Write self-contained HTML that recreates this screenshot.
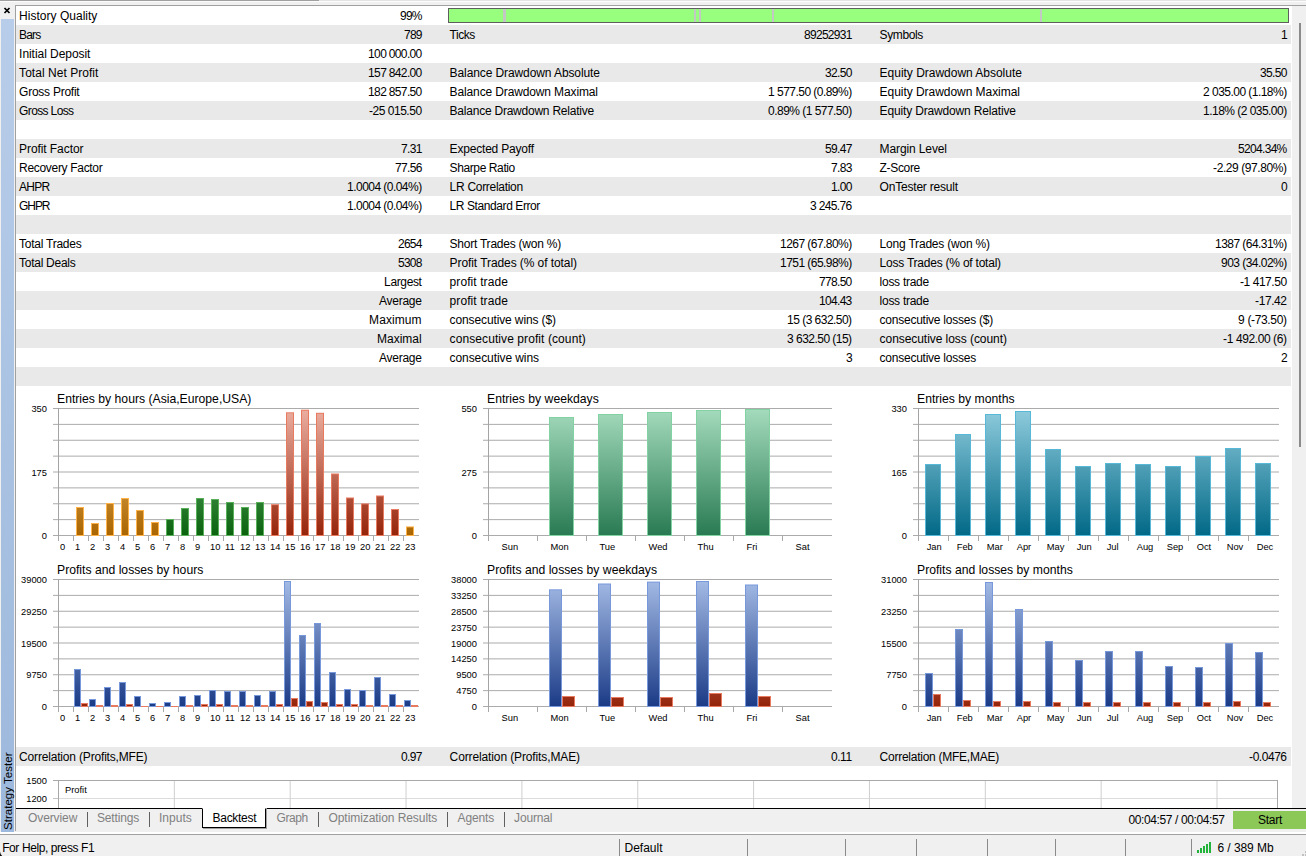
<!DOCTYPE html>
<html><head><meta charset="utf-8"><title>Strategy Tester</title>
<style>
html,body{margin:0;padding:0;}
html{width:1306px;height:856px;overflow:hidden;}
body{width:1306px;height:856px;overflow:hidden;background:#f0f0f0;position:relative;font-family:"Liberation Sans",sans-serif;font-size:12px;color:#000;}
div,span{position:absolute;box-sizing:border-box;}
.t{white-space:pre;line-height:19px;height:19px;font-size:12px;overflow:visible;}
.t.sb{height:15px;line-height:15px;}
.row{left:16px;width:1275px;height:19px;background:#e9e9e9;}
svg{position:absolute;left:0;top:0;}
svg text{font-family:"Liberation Sans",sans-serif;}
</style></head><body>

<div style="left:0;top:0;width:319px;height:1px;background:#a0a0a0"></div>
<div style="left:319px;top:0;width:987px;height:1px;background:#e3e3e3"></div>
<div style="left:0;top:1px;width:1306px;height:1px;background:#fcfcfc"></div>
<div style="left:15px;top:5px;width:1291px;height:1px;background:#a0a0a0"></div>
<div style="left:15px;top:5px;width:1px;height:826px;background:#a0a0a0"></div>
<div style="left:1px;top:19px;width:13px;height:813px;background:linear-gradient(#b8cde9,#9cb8dc)"></div>
<div style="left:16px;top:6px;width:1276px;height:802px;background:#fff"></div>
<div style="left:1292px;top:6px;width:14px;height:802px;background:#f0f0f0"></div>
<div style="left:1299px;top:23px;width:2px;height:424px;background:#8b8b8b"></div>
<div class="row" style="top:25px"></div>
<div class="row" style="top:63px"></div>
<div class="row" style="top:101px"></div>
<div class="row" style="top:139px"></div>
<div class="row" style="top:177px"></div>
<div class="row" style="top:215px"></div>
<div class="row" style="top:253px"></div>
<div class="row" style="top:291px"></div>
<div class="row" style="top:329px"></div>
<div class="row" style="top:367px"></div>
<div class="row" style="top:747px"></div>
<div style="left:448px;top:8px;width:841px;height:15px;background:#97fe7e;border:1px solid #5e5e5e"></div>
<div style="left:503px;top:9px;width:3px;height:13px;background:#c4c8c4"></div>
<div style="left:694px;top:9px;width:2px;height:13px;background:#c4c8c4"></div>
<div style="left:699px;top:9px;width:2px;height:13px;background:#c4c8c4"></div>
<div style="left:772px;top:9px;width:2px;height:13px;background:#c4c8c4"></div>
<div style="left:1040px;top:9px;width:2px;height:13px;background:#c4c8c4"></div>
<div style="left:16px;top:808px;width:1290px;height:1px;background:#000"></div>
<div style="left:16px;top:809px;width:1290px;height:23px;background:#f0f0f0"></div>
<div style="left:0px;top:832px;width:1306px;height:2px;background:#fff"></div>
<div style="left:0px;top:834px;width:1306px;height:1px;background:#a0a0a0"></div>
<div style="left:203px;top:808px;width:64px;height:21px;background:#a0a0a0"></div>
<div style="left:202px;top:808px;width:64px;height:20px;background:#fff;border:1px solid #000;border-top:1px solid #fff"></div>
<div style="left:87px;top:812px;width:1px;height:15px;background:#606060"></div>
<div style="left:149px;top:812px;width:1px;height:15px;background:#606060"></div>
<div style="left:318px;top:812px;width:1px;height:15px;background:#606060"></div>
<div style="left:447px;top:812px;width:1px;height:15px;background:#606060"></div>
<div style="left:504px;top:812px;width:1px;height:15px;background:#606060"></div>
<div style="left:1233px;top:811px;width:73px;height:18px;background:#8cc858"></div>
<div style="left:619px;top:839px;width:1px;height:17px;background:#8a8a8a"></div>
<div style="left:747px;top:839px;width:1px;height:17px;background:#8a8a8a"></div>
<div style="left:845px;top:839px;width:1px;height:17px;background:#8a8a8a"></div>
<div style="left:916px;top:839px;width:1px;height:17px;background:#8a8a8a"></div>
<div style="left:987px;top:839px;width:1px;height:17px;background:#8a8a8a"></div>
<div style="left:1055px;top:839px;width:1px;height:17px;background:#8a8a8a"></div>
<div style="left:1125px;top:839px;width:1px;height:17px;background:#8a8a8a"></div>
<div style="left:1191px;top:839px;width:1px;height:17px;background:#8a8a8a"></div>
<svg width="16" height="20" style="left:0;top:0"><path d="M4.5 8 L9.5 13 M9.5 8 L4.5 13" stroke="#000" stroke-width="1.7" fill="none"/></svg>
<span id="vt" style="left:2px;top:830px;width:80px;height:13px;line-height:13px;font-size:11.5px;letter-spacing:0.03px;white-space:pre;transform-origin:0 0;transform:rotate(-90deg);">Strategy Tester</span>
<span class="t" id="s0" style="left:19.10px;top:7.0px;letter-spacing:0.018px;">History Quality</span>
<span class="t" id="s1" style="left:400.10px;top:7.0px;letter-spacing:-0.844px;">99%</span>
<span class="t" id="s2" style="left:19.10px;top:26.0px;letter-spacing:-0.847px;">Bars</span>
<span class="t" id="s3" style="left:404.10px;top:26.0px;letter-spacing:-0.844px;">789</span>
<span class="t" id="s4" style="left:449.60px;top:26.0px;letter-spacing:-0.452px;">Ticks</span>
<span class="t" id="s5" style="left:804.10px;top:26.0px;letter-spacing:-0.736px;">89252931</span>
<span class="t" id="s6" style="left:879.60px;top:26.0px;letter-spacing:-0.388px;">Symbols</span>
<span class="t" id="s7" style="left:1281.10px;top:26.0px;letter-spacing:-1.188px;">1</span>
<span class="t" id="s8" style="left:19.10px;top:45.0px;letter-spacing:-0.050px;">Initial Deposit</span>
<span class="t" id="s9" style="left:368.10px;top:45.0px;letter-spacing:-0.656px;">100 000.00</span>
<span class="t" id="s10" style="left:19.10px;top:64.0px;letter-spacing:0.037px;">Total Net Profit</span>
<span class="t" id="s11" style="left:368.10px;top:64.0px;letter-spacing:-0.656px;">157 842.00</span>
<span class="t" id="s12" style="left:449.60px;top:64.0px;letter-spacing:-0.099px;">Balance Drawdown Absolute</span>
<span class="t" id="s13" style="left:825.10px;top:64.0px;letter-spacing:-0.706px;">32.50</span>
<span class="t" id="s14" style="left:879.60px;top:64.0px;letter-spacing:-0.019px;">Equity Drawdown Absolute</span>
<span class="t" id="s15" style="left:1260.10px;top:64.0px;letter-spacing:-0.706px;">35.50</span>
<span class="t" id="s16" style="left:19.10px;top:83.0px;letter-spacing:-0.255px;">Gross Profit</span>
<span class="t" id="s17" style="left:368.10px;top:83.0px;letter-spacing:-0.656px;">182 857.50</span>
<span class="t" id="s18" style="left:449.60px;top:83.0px;letter-spacing:-0.129px;">Balance Drawdown Maximal</span>
<span class="t" id="s19" style="left:768.10px;top:83.0px;letter-spacing:-0.535px;">1 577.50 (0.89%)</span>
<span class="t" id="s20" style="left:879.60px;top:83.0px;letter-spacing:-0.047px;">Equity Drawdown Maximal</span>
<span class="t" id="s21" style="left:1203.10px;top:83.0px;letter-spacing:-0.535px;">2 035.00 (1.18%)</span>
<span class="t" id="s22" style="left:19.10px;top:102.0px;letter-spacing:-0.639px;">Gross Loss</span>
<span class="t" id="s23" style="left:369.10px;top:102.0px;letter-spacing:-0.489px;">-25 015.50</span>
<span class="t" id="s24" style="left:449.60px;top:102.0px;letter-spacing:-0.231px;">Balance Drawdown Relative</span>
<span class="t" id="s25" style="left:768.10px;top:102.0px;letter-spacing:-0.535px;">0.89% (1 577.50)</span>
<span class="t" id="s26" style="left:879.60px;top:102.0px;letter-spacing:-0.157px;">Equity Drawdown Relative</span>
<span class="t" id="s27" style="left:1203.10px;top:102.0px;letter-spacing:-0.535px;">1.18% (2 035.00)</span>
<span class="t" id="s28" style="left:19.10px;top:140.0px;letter-spacing:-0.081px;">Profit Factor</span>
<span class="t" id="s29" style="left:401.10px;top:140.0px;letter-spacing:-0.715px;">7.31</span>
<span class="t" id="s30" style="left:449.60px;top:140.0px;letter-spacing:-0.191px;">Expected Payoff</span>
<span class="t" id="s31" style="left:825.10px;top:140.0px;letter-spacing:-0.706px;">59.47</span>
<span class="t" id="s32" style="left:879.60px;top:140.0px;letter-spacing:-0.117px;">Margin Level</span>
<span class="t" id="s33" style="left:1238.10px;top:140.0px;letter-spacing:-0.693px;">5204.34%</span>
<span class="t" id="s34" style="left:19.10px;top:159.0px;letter-spacing:-0.315px;">Recovery Factor</span>
<span class="t" id="s35" style="left:395.10px;top:159.0px;letter-spacing:-0.706px;">77.56</span>
<span class="t" id="s36" style="left:449.60px;top:159.0px;letter-spacing:-0.396px;">Sharpe Ratio</span>
<span class="t" id="s37" style="left:831.10px;top:159.0px;letter-spacing:-0.715px;">7.83</span>
<span class="t" id="s38" style="left:879.60px;top:159.0px;letter-spacing:-0.341px;">Z-Score</span>
<span class="t" id="s39" style="left:1213.10px;top:159.0px;letter-spacing:-0.421px;">-2.29 (97.80%)</span>
<span class="t" id="s40" style="left:19.10px;top:178.0px;letter-spacing:-0.761px;">AHPR</span>
<span class="t" id="s41" style="left:347.10px;top:178.0px;letter-spacing:-0.540px;">1.0004 (0.04%)</span>
<span class="t" id="s42" style="left:449.60px;top:178.0px;letter-spacing:-0.291px;">LR Correlation</span>
<span class="t" id="s43" style="left:831.10px;top:178.0px;letter-spacing:-0.715px;">1.00</span>
<span class="t" id="s44" style="left:879.60px;top:178.0px;letter-spacing:-0.205px;">OnTester result</span>
<span class="t" id="s45" style="left:1281.10px;top:178.0px;letter-spacing:-1.188px;">0</span>
<span class="t" id="s46" style="left:19.10px;top:197.0px;letter-spacing:-1.093px;">GHPR</span>
<span class="t" id="s47" style="left:347.10px;top:197.0px;letter-spacing:-0.540px;">1.0004 (0.04%)</span>
<span class="t" id="s48" style="left:449.60px;top:197.0px;letter-spacing:-0.417px;">LR Standard Error</span>
<span class="t" id="s49" style="left:810.10px;top:197.0px;letter-spacing:-0.652px;">3 245.76</span>
<span class="t" id="s50" style="left:19.10px;top:235.0px;letter-spacing:-0.256px;">Total Trades</span>
<span class="t" id="s51" style="left:398.10px;top:235.0px;letter-spacing:-0.801px;">2654</span>
<span class="t" id="s52" style="left:449.60px;top:235.0px;letter-spacing:-0.237px;">Short Trades (won %)</span>
<span class="t" id="s53" style="left:780.10px;top:235.0px;letter-spacing:-0.556px;">1267 (67.80%)</span>
<span class="t" id="s54" style="left:879.60px;top:235.0px;letter-spacing:-0.198px;">Long Trades (won %)</span>
<span class="t" id="s55" style="left:1215.10px;top:235.0px;letter-spacing:-0.556px;">1387 (64.31%)</span>
<span class="t" id="s56" style="left:19.10px;top:254.0px;letter-spacing:-0.280px;">Total Deals</span>
<span class="t" id="s57" style="left:398.10px;top:254.0px;letter-spacing:-0.801px;">5308</span>
<span class="t" id="s58" style="left:449.60px;top:254.0px;letter-spacing:-0.080px;">Profit Trades (% of total)</span>
<span class="t" id="s59" style="left:780.10px;top:254.0px;letter-spacing:-0.556px;">1751 (65.98%)</span>
<span class="t" id="s60" style="left:879.60px;top:254.0px;letter-spacing:-0.226px;">Loss Trades (% of total)</span>
<span class="t" id="s61" style="left:1221.10px;top:254.0px;letter-spacing:-0.546px;">903 (34.02%)</span>
<span class="t" id="s62" style="left:384.10px;top:273.0px;letter-spacing:-0.362px;">Largest</span>
<span class="t" id="s63" style="left:449.60px;top:273.0px;letter-spacing:0.077px;">profit trade</span>
<span class="t" id="s64" style="left:819.10px;top:273.0px;letter-spacing:-0.701px;">778.50</span>
<span class="t" id="s65" style="left:879.60px;top:273.0px;letter-spacing:-0.273px;">loss trade</span>
<span class="t" id="s66" style="left:1240.10px;top:273.0px;letter-spacing:-0.469px;">-1 417.50</span>
<span class="t" id="s67" style="left:379.10px;top:292.0px;letter-spacing:-0.283px;">Average</span>
<span class="t" id="s68" style="left:449.60px;top:292.0px;letter-spacing:0.077px;">profit trade</span>
<span class="t" id="s69" style="left:819.10px;top:292.0px;letter-spacing:-0.701px;">104.43</span>
<span class="t" id="s70" style="left:879.60px;top:292.0px;letter-spacing:-0.273px;">loss trade</span>
<span class="t" id="s71" style="left:1255.10px;top:292.0px;letter-spacing:-0.422px;">-17.42</span>
<span class="t" id="s72" style="left:369.10px;top:311.0px;letter-spacing:0.069px;">Maximum</span>
<span class="t" id="s73" style="left:449.60px;top:311.0px;letter-spacing:-0.121px;">consecutive wins ($)</span>
<span class="t" id="s74" style="left:787.10px;top:311.0px;letter-spacing:-0.530px;">15 (3 632.50)</span>
<span class="t" id="s75" style="left:879.60px;top:311.0px;letter-spacing:-0.246px;">consecutive losses ($)</span>
<span class="t" id="s76" style="left:1238.10px;top:311.0px;letter-spacing:-0.353px;">9 (-73.50)</span>
<span class="t" id="s77" style="left:377.10px;top:330.0px;letter-spacing:-0.025px;">Maximal</span>
<span class="t" id="s78" style="left:449.60px;top:330.0px;letter-spacing:0.086px;">consecutive profit (count)</span>
<span class="t" id="s79" style="left:787.10px;top:330.0px;letter-spacing:-0.530px;">3 632.50 (15)</span>
<span class="t" id="s80" style="left:879.60px;top:330.0px;letter-spacing:-0.060px;">consecutive loss (count)</span>
<span class="t" id="s81" style="left:1223.10px;top:330.0px;letter-spacing:-0.401px;">-1 492.00 (6)</span>
<span class="t" id="s82" style="left:379.10px;top:349.0px;letter-spacing:-0.283px;">Average</span>
<span class="t" id="s83" style="left:449.60px;top:349.0px;letter-spacing:-0.089px;">consecutive wins</span>
<span class="t" id="s84" style="left:846.10px;top:349.0px;letter-spacing:-1.188px;">3</span>
<span class="t" id="s85" style="left:879.60px;top:349.0px;letter-spacing:-0.245px;">consecutive losses</span>
<span class="t" id="s86" style="left:1281.10px;top:349.0px;letter-spacing:-1.188px;">2</span>
<span class="t" id="s87" style="left:19.10px;top:748.0px;letter-spacing:-0.176px;">Correlation (Profits,MFE)</span>
<span class="t" id="s88" style="left:401.10px;top:748.0px;letter-spacing:-0.715px;">0.97</span>
<span class="t" id="s89" style="left:449.60px;top:748.0px;letter-spacing:-0.123px;">Correlation (Profits,MAE)</span>
<span class="t" id="s90" style="left:831.10px;top:748.0px;letter-spacing:-0.492px;">0.11</span>
<span class="t" id="s91" style="left:879.60px;top:748.0px;letter-spacing:-0.257px;">Correlation (MFE,MAE)</span>
<span class="t" id="s92" style="left:1249.10px;top:748.0px;letter-spacing:-0.458px;">-0.0476</span>
<span class="t" id="s93" style="left:28.00px;top:808.5px;letter-spacing:-0.102px;color:#808080;">Overview</span>
<span class="t" id="s94" style="left:97.00px;top:808.5px;letter-spacing:-0.170px;color:#808080;">Settings</span>
<span class="t" id="s95" style="left:159.00px;top:808.5px;letter-spacing:0.033px;color:#808080;">Inputs</span>
<span class="t" id="s96" style="left:212.60px;top:808.5px;letter-spacing:-0.304px;color:#000;">Backtest</span>
<span class="t" id="s97" style="left:276.50px;top:808.5px;letter-spacing:-0.432px;color:#808080;">Graph</span>
<span class="t" id="s98" style="left:328.50px;top:808.5px;letter-spacing:-0.067px;color:#808080;">Optimization Results</span>
<span class="t" id="s99" style="left:457.50px;top:808.5px;letter-spacing:-0.110px;color:#808080;">Agents</span>
<span class="t" id="s100" style="left:514.10px;top:808.5px;letter-spacing:-0.180px;color:#808080;">Journal</span>
<span class="t sb" id="s101" style="left:2.20px;top:841.0px;letter-spacing:-0.410px;">For Help, press F1</span>
<span class="t sb" id="s102" style="left:624.50px;top:841.0px;letter-spacing:-0.004px;">Default</span>
<span class="t" id="s103" style="left:1128.50px;top:810.5px;letter-spacing:-0.391px;">00:04:57 / 00:04:57</span>
<span class="t" id="s104" style="left:1258.00px;top:810.5px;letter-spacing:-0.269px;">Start</span>
<span class="t sb" id="s105" style="left:1217.50px;top:841.0px;letter-spacing:-0.070px;">6 / 389 Mb</span>
<svg width="1306" height="856" style="pointer-events:none"><rect x="1197" y="850" width="2" height="3" fill="#22b43a"/><rect x="1200" y="848" width="2" height="5" fill="#22b43a"/><rect x="1203" y="846" width="2" height="7" fill="#22b43a"/><rect x="1206" y="844" width="2" height="9" fill="#22b43a"/><rect x="1209" y="842" width="2" height="11" fill="#22b43a"/><rect x="1302" y="854" width="2" height="2" fill="#c0c0c0"/><rect x="1305" y="854" width="1" height="2" fill="#c0c0c0"/><rect x="1305" y="851" width="1" height="2" fill="#c0c0c0"/><path d="M0 851.5 Q0.3 854.5 2.2 856 L0 856 Z" fill="#111"/></svg>
<svg width="1306" height="856" viewBox="0 0 1306 856" style="pointer-events:none">
<defs>
<linearGradient id="gorangeT" gradientUnits="userSpaceOnUse" x1="0" y1="408" x2="0" y2="536"><stop offset="0" stop-color="rgb(255,212,140)"/><stop offset="1" stop-color="rgb(168,100,0)"/></linearGradient>
<linearGradient id="gorangeB" gradientUnits="userSpaceOnUse" x1="0" y1="579" x2="0" y2="707"><stop offset="0" stop-color="rgb(255,212,140)"/><stop offset="1" stop-color="rgb(168,100,0)"/></linearGradient>
<linearGradient id="gdgreenT" gradientUnits="userSpaceOnUse" x1="0" y1="408" x2="0" y2="536"><stop offset="0" stop-color="rgb(131,201,142)"/><stop offset="1" stop-color="rgb(10,98,14)"/></linearGradient>
<linearGradient id="gdgreenB" gradientUnits="userSpaceOnUse" x1="0" y1="579" x2="0" y2="707"><stop offset="0" stop-color="rgb(131,201,142)"/><stop offset="1" stop-color="rgb(10,98,14)"/></linearGradient>
<linearGradient id="gredT" gradientUnits="userSpaceOnUse" x1="0" y1="408" x2="0" y2="536"><stop offset="0" stop-color="rgb(236,176,162)"/><stop offset="1" stop-color="rgb(148,36,10)"/></linearGradient>
<linearGradient id="gredB" gradientUnits="userSpaceOnUse" x1="0" y1="579" x2="0" y2="707"><stop offset="0" stop-color="rgb(236,176,162)"/><stop offset="1" stop-color="rgb(148,36,10)"/></linearGradient>
<linearGradient id="glgreenT" gradientUnits="userSpaceOnUse" x1="0" y1="408" x2="0" y2="536"><stop offset="0" stop-color="rgb(165,220,190)"/><stop offset="1" stop-color="rgb(40,122,82)"/></linearGradient>
<linearGradient id="glgreenB" gradientUnits="userSpaceOnUse" x1="0" y1="579" x2="0" y2="707"><stop offset="0" stop-color="rgb(165,220,190)"/><stop offset="1" stop-color="rgb(40,122,82)"/></linearGradient>
<linearGradient id="gtealT" gradientUnits="userSpaceOnUse" x1="0" y1="408" x2="0" y2="536"><stop offset="0" stop-color="rgb(145,205,222)"/><stop offset="1" stop-color="rgb(0,104,134)"/></linearGradient>
<linearGradient id="gtealB" gradientUnits="userSpaceOnUse" x1="0" y1="579" x2="0" y2="707"><stop offset="0" stop-color="rgb(145,205,222)"/><stop offset="1" stop-color="rgb(0,104,134)"/></linearGradient>
<linearGradient id="gblueT" gradientUnits="userSpaceOnUse" x1="0" y1="408" x2="0" y2="536"><stop offset="0" stop-color="rgb(165,188,230)"/><stop offset="1" stop-color="rgb(26,58,134)"/></linearGradient>
<linearGradient id="gblueB" gradientUnits="userSpaceOnUse" x1="0" y1="579" x2="0" y2="707"><stop offset="0" stop-color="rgb(165,188,230)"/><stop offset="1" stop-color="rgb(26,58,134)"/></linearGradient>
<linearGradient id="glossT" gradientUnits="userSpaceOnUse" x1="0" y1="408" x2="0" y2="536"><stop offset="0" stop-color="rgb(236,176,162)"/><stop offset="1" stop-color="rgb(148,36,10)"/></linearGradient>
<linearGradient id="glossB" gradientUnits="userSpaceOnUse" x1="0" y1="579" x2="0" y2="707"><stop offset="0" stop-color="rgb(236,176,162)"/><stop offset="1" stop-color="rgb(148,36,10)"/></linearGradient>
</defs>
<line x1="53" y1="408.500" x2="419" y2="408.500" stroke="#ababab" stroke-width="1"/>
<line x1="53" y1="424.375" x2="419" y2="424.375" stroke="#ababab" stroke-width="1"/>
<line x1="53" y1="440.250" x2="419" y2="440.250" stroke="#ababab" stroke-width="1"/>
<line x1="53" y1="456.125" x2="419" y2="456.125" stroke="#ababab" stroke-width="1"/>
<line x1="53" y1="472.000" x2="419" y2="472.000" stroke="#ababab" stroke-width="1"/>
<line x1="53" y1="487.875" x2="419" y2="487.875" stroke="#ababab" stroke-width="1"/>
<line x1="53" y1="503.750" x2="419" y2="503.750" stroke="#ababab" stroke-width="1"/>
<line x1="53" y1="519.625" x2="419" y2="519.625" stroke="#ababab" stroke-width="1"/>
<line x1="53" y1="535.500" x2="419" y2="535.500" stroke="#ababab" stroke-width="1"/>
<rect x="58" y="408" width="1" height="128" fill="#a4a4a4"/>
<rect x="58" y="536" width="1" height="5" fill="#a8a8a8"/>
<rect x="73" y="536" width="1" height="5" fill="#a8a8a8"/>
<rect x="88" y="536" width="1" height="5" fill="#a8a8a8"/>
<rect x="103" y="536" width="1" height="5" fill="#a8a8a8"/>
<rect x="118" y="536" width="1" height="5" fill="#a8a8a8"/>
<rect x="133" y="536" width="1" height="5" fill="#a8a8a8"/>
<rect x="148" y="536" width="1" height="5" fill="#a8a8a8"/>
<rect x="163" y="536" width="1" height="5" fill="#a8a8a8"/>
<rect x="178" y="536" width="1" height="5" fill="#a8a8a8"/>
<rect x="193" y="536" width="1" height="5" fill="#a8a8a8"/>
<rect x="208" y="536" width="1" height="5" fill="#a8a8a8"/>
<rect x="223" y="536" width="1" height="5" fill="#a8a8a8"/>
<rect x="238" y="536" width="1" height="5" fill="#a8a8a8"/>
<rect x="253" y="536" width="1" height="5" fill="#a8a8a8"/>
<rect x="268" y="536" width="1" height="5" fill="#a8a8a8"/>
<rect x="283" y="536" width="1" height="5" fill="#a8a8a8"/>
<rect x="298" y="536" width="1" height="5" fill="#a8a8a8"/>
<rect x="313" y="536" width="1" height="5" fill="#a8a8a8"/>
<rect x="328" y="536" width="1" height="5" fill="#a8a8a8"/>
<rect x="343" y="536" width="1" height="5" fill="#a8a8a8"/>
<rect x="358" y="536" width="1" height="5" fill="#a8a8a8"/>
<rect x="373" y="536" width="1" height="5" fill="#a8a8a8"/>
<rect x="388" y="536" width="1" height="5" fill="#a8a8a8"/>
<rect x="403" y="536" width="1" height="5" fill="#a8a8a8"/>
<text x="57" y="403" font-size="12.2" fill="#000">Entries by hours (Asia,Europe,USA)</text>
<text x="47.0" y="412.0" font-size="9.33" text-anchor="end" fill="#000">350</text>
<text x="47.0" y="475.5" font-size="9.33" text-anchor="end" fill="#000">175</text>
<text x="47.0" y="539.0" font-size="9.33" text-anchor="end" fill="#000">0</text>
<text x="60.0" y="550" font-size="9.33" fill="#000">0</text>
<text x="75.0" y="550" font-size="9.33" fill="#000">1</text>
<text x="90.0" y="550" font-size="9.33" fill="#000">2</text>
<text x="105.0" y="550" font-size="9.33" fill="#000">3</text>
<text x="120.0" y="550" font-size="9.33" fill="#000">4</text>
<text x="135.0" y="550" font-size="9.33" fill="#000">5</text>
<text x="150.0" y="550" font-size="9.33" fill="#000">6</text>
<text x="165.0" y="550" font-size="9.33" fill="#000">7</text>
<text x="180.0" y="550" font-size="9.33" fill="#000">8</text>
<text x="195.0" y="550" font-size="9.33" fill="#000">9</text>
<text x="210.0" y="550" font-size="9.33" fill="#000">10</text>
<text x="225.0" y="550" font-size="9.33" fill="#000">11</text>
<text x="240.0" y="550" font-size="9.33" fill="#000">12</text>
<text x="255.0" y="550" font-size="9.33" fill="#000">13</text>
<text x="270.0" y="550" font-size="9.33" fill="#000">14</text>
<text x="285.0" y="550" font-size="9.33" fill="#000">15</text>
<text x="300.0" y="550" font-size="9.33" fill="#000">16</text>
<text x="315.0" y="550" font-size="9.33" fill="#000">17</text>
<text x="330.0" y="550" font-size="9.33" fill="#000">18</text>
<text x="345.0" y="550" font-size="9.33" fill="#000">19</text>
<text x="360.0" y="550" font-size="9.33" fill="#000">20</text>
<text x="375.0" y="550" font-size="9.33" fill="#000">21</text>
<text x="390.0" y="550" font-size="9.33" fill="#000">22</text>
<text x="405.0" y="550" font-size="9.33" fill="#000">23</text>
<rect x="76" y="507.00" width="8" height="29.00" fill="rgb(255,178,72)"/>
<rect x="77" y="508.00" width="6" height="27.00" fill="url(#gorangeT)"/>
<rect x="91" y="523.00" width="8" height="13.00" fill="rgb(255,178,72)"/>
<rect x="92" y="524.00" width="6" height="11.00" fill="url(#gorangeT)"/>
<rect x="106" y="503.00" width="8" height="33.00" fill="rgb(255,178,72)"/>
<rect x="107" y="504.00" width="6" height="31.00" fill="url(#gorangeT)"/>
<rect x="121" y="498.00" width="8" height="38.00" fill="rgb(255,178,72)"/>
<rect x="122" y="499.00" width="6" height="36.00" fill="url(#gorangeT)"/>
<rect x="136" y="510.00" width="8" height="26.00" fill="rgb(255,178,72)"/>
<rect x="137" y="511.00" width="6" height="24.00" fill="url(#gorangeT)"/>
<rect x="151" y="522.00" width="8" height="14.00" fill="rgb(255,178,72)"/>
<rect x="152" y="523.00" width="6" height="12.00" fill="url(#gorangeT)"/>
<rect x="166" y="519.00" width="8" height="17.00" fill="rgb(88,176,88)"/>
<rect x="167" y="520.00" width="6" height="15.00" fill="url(#gdgreenT)"/>
<rect x="181" y="508.00" width="8" height="28.00" fill="rgb(88,176,88)"/>
<rect x="182" y="509.00" width="6" height="26.00" fill="url(#gdgreenT)"/>
<rect x="196" y="498.00" width="8" height="38.00" fill="rgb(88,176,88)"/>
<rect x="197" y="499.00" width="6" height="36.00" fill="url(#gdgreenT)"/>
<rect x="211" y="499.00" width="8" height="37.00" fill="rgb(88,176,88)"/>
<rect x="212" y="500.00" width="6" height="35.00" fill="url(#gdgreenT)"/>
<rect x="226" y="502.00" width="8" height="34.00" fill="rgb(88,176,88)"/>
<rect x="227" y="503.00" width="6" height="32.00" fill="url(#gdgreenT)"/>
<rect x="241" y="507.00" width="8" height="29.00" fill="rgb(88,176,88)"/>
<rect x="242" y="508.00" width="6" height="27.00" fill="url(#gdgreenT)"/>
<rect x="256" y="502.00" width="8" height="34.00" fill="rgb(88,176,88)"/>
<rect x="257" y="503.00" width="6" height="32.00" fill="url(#gdgreenT)"/>
<rect x="271" y="504.20" width="8" height="31.80" fill="rgb(232,122,96)"/>
<rect x="272" y="505.20" width="6" height="29.80" fill="url(#gredT)"/>
<rect x="286" y="412.30" width="8" height="123.70" fill="rgb(232,122,96)"/>
<rect x="287" y="413.30" width="6" height="121.70" fill="url(#gredT)"/>
<rect x="301" y="409.70" width="8" height="126.30" fill="rgb(232,122,96)"/>
<rect x="302" y="410.70" width="6" height="124.30" fill="url(#gredT)"/>
<rect x="316" y="412.80" width="8" height="123.20" fill="rgb(232,122,96)"/>
<rect x="317" y="413.80" width="6" height="121.20" fill="url(#gredT)"/>
<rect x="331" y="473.50" width="8" height="62.50" fill="rgb(232,122,96)"/>
<rect x="332" y="474.50" width="6" height="60.50" fill="url(#gredT)"/>
<rect x="346" y="497.50" width="8" height="38.50" fill="rgb(232,122,96)"/>
<rect x="347" y="498.50" width="6" height="36.50" fill="url(#gredT)"/>
<rect x="361" y="503.40" width="8" height="32.60" fill="rgb(232,122,96)"/>
<rect x="362" y="504.40" width="6" height="30.60" fill="url(#gredT)"/>
<rect x="376" y="495.50" width="8" height="40.50" fill="rgb(232,122,96)"/>
<rect x="377" y="496.50" width="6" height="38.50" fill="url(#gredT)"/>
<rect x="391" y="509.00" width="8" height="27.00" fill="rgb(232,122,96)"/>
<rect x="392" y="510.00" width="6" height="25.00" fill="url(#gredT)"/>
<rect x="406" y="526.40" width="8" height="9.60" fill="rgb(255,178,72)"/>
<rect x="407" y="527.40" width="6" height="7.60" fill="url(#gorangeT)"/>
<line x1="483" y1="408.500" x2="832" y2="408.500" stroke="#ababab" stroke-width="1"/>
<line x1="483" y1="424.375" x2="832" y2="424.375" stroke="#ababab" stroke-width="1"/>
<line x1="483" y1="440.250" x2="832" y2="440.250" stroke="#ababab" stroke-width="1"/>
<line x1="483" y1="456.125" x2="832" y2="456.125" stroke="#ababab" stroke-width="1"/>
<line x1="483" y1="472.000" x2="832" y2="472.000" stroke="#ababab" stroke-width="1"/>
<line x1="483" y1="487.875" x2="832" y2="487.875" stroke="#ababab" stroke-width="1"/>
<line x1="483" y1="503.750" x2="832" y2="503.750" stroke="#ababab" stroke-width="1"/>
<line x1="483" y1="519.625" x2="832" y2="519.625" stroke="#ababab" stroke-width="1"/>
<line x1="483" y1="535.500" x2="832" y2="535.500" stroke="#ababab" stroke-width="1"/>
<rect x="488" y="408" width="1" height="128" fill="#a4a4a4"/>
<rect x="488" y="536" width="1" height="5" fill="#a8a8a8"/>
<rect x="537" y="536" width="1" height="5" fill="#a8a8a8"/>
<rect x="586" y="536" width="1" height="5" fill="#a8a8a8"/>
<rect x="635" y="536" width="1" height="5" fill="#a8a8a8"/>
<rect x="684" y="536" width="1" height="5" fill="#a8a8a8"/>
<rect x="733" y="536" width="1" height="5" fill="#a8a8a8"/>
<rect x="782" y="536" width="1" height="5" fill="#a8a8a8"/>
<text x="487" y="403" font-size="12.2" fill="#000">Entries by weekdays</text>
<text x="477.0" y="412.0" font-size="9.33" text-anchor="end" fill="#000">550</text>
<text x="477.0" y="475.5" font-size="9.33" text-anchor="end" fill="#000">275</text>
<text x="477.0" y="539.0" font-size="9.33" text-anchor="end" fill="#000">0</text>
<text x="501.5" y="550" font-size="9.33" fill="#000">Sun</text>
<text x="550.5" y="550" font-size="9.33" fill="#000">Mon</text>
<text x="599.5" y="550" font-size="9.33" fill="#000">Tue</text>
<text x="648.5" y="550" font-size="9.33" fill="#000">Wed</text>
<text x="697.5" y="550" font-size="9.33" fill="#000">Thu</text>
<text x="746.5" y="550" font-size="9.33" fill="#000">Fri</text>
<text x="795.5" y="550" font-size="9.33" fill="#000">Sat</text>
<rect x="549" y="417.00" width="25" height="119.00" fill="rgb(130,210,164)"/>
<rect x="550" y="418.00" width="23" height="117.00" fill="url(#glgreenT)"/>
<rect x="598" y="414.00" width="25" height="122.00" fill="rgb(130,210,164)"/>
<rect x="599" y="415.00" width="23" height="120.00" fill="url(#glgreenT)"/>
<rect x="647" y="412.00" width="25" height="124.00" fill="rgb(130,210,164)"/>
<rect x="648" y="413.00" width="23" height="122.00" fill="url(#glgreenT)"/>
<rect x="696" y="410.00" width="25" height="126.00" fill="rgb(130,210,164)"/>
<rect x="697" y="411.00" width="23" height="124.00" fill="url(#glgreenT)"/>
<rect x="745" y="409.00" width="25" height="127.00" fill="rgb(130,210,164)"/>
<rect x="746" y="410.00" width="23" height="125.00" fill="url(#glgreenT)"/>
<line x1="913" y1="408.500" x2="1279" y2="408.500" stroke="#ababab" stroke-width="1"/>
<line x1="913" y1="424.375" x2="1279" y2="424.375" stroke="#ababab" stroke-width="1"/>
<line x1="913" y1="440.250" x2="1279" y2="440.250" stroke="#ababab" stroke-width="1"/>
<line x1="913" y1="456.125" x2="1279" y2="456.125" stroke="#ababab" stroke-width="1"/>
<line x1="913" y1="472.000" x2="1279" y2="472.000" stroke="#ababab" stroke-width="1"/>
<line x1="913" y1="487.875" x2="1279" y2="487.875" stroke="#ababab" stroke-width="1"/>
<line x1="913" y1="503.750" x2="1279" y2="503.750" stroke="#ababab" stroke-width="1"/>
<line x1="913" y1="519.625" x2="1279" y2="519.625" stroke="#ababab" stroke-width="1"/>
<line x1="913" y1="535.500" x2="1279" y2="535.500" stroke="#ababab" stroke-width="1"/>
<rect x="918" y="408" width="1" height="128" fill="#a4a4a4"/>
<rect x="918" y="536" width="1" height="5" fill="#a8a8a8"/>
<rect x="948" y="536" width="1" height="5" fill="#a8a8a8"/>
<rect x="978" y="536" width="1" height="5" fill="#a8a8a8"/>
<rect x="1008" y="536" width="1" height="5" fill="#a8a8a8"/>
<rect x="1038" y="536" width="1" height="5" fill="#a8a8a8"/>
<rect x="1068" y="536" width="1" height="5" fill="#a8a8a8"/>
<rect x="1098" y="536" width="1" height="5" fill="#a8a8a8"/>
<rect x="1128" y="536" width="1" height="5" fill="#a8a8a8"/>
<rect x="1158" y="536" width="1" height="5" fill="#a8a8a8"/>
<rect x="1188" y="536" width="1" height="5" fill="#a8a8a8"/>
<rect x="1218" y="536" width="1" height="5" fill="#a8a8a8"/>
<rect x="1248" y="536" width="1" height="5" fill="#a8a8a8"/>
<text x="917" y="403" font-size="12.2" fill="#000">Entries by months</text>
<text x="907.0" y="412.0" font-size="9.33" text-anchor="end" fill="#000">330</text>
<text x="907.0" y="475.5" font-size="9.33" text-anchor="end" fill="#000">165</text>
<text x="907.0" y="539.0" font-size="9.33" text-anchor="end" fill="#000">0</text>
<text x="926.7" y="550" font-size="9.33" fill="#000">Jan</text>
<text x="956.7" y="550" font-size="9.33" fill="#000">Feb</text>
<text x="986.7" y="550" font-size="9.33" fill="#000">Mar</text>
<text x="1016.7" y="550" font-size="9.33" fill="#000">Apr</text>
<text x="1046.7" y="550" font-size="9.33" fill="#000">May</text>
<text x="1076.7" y="550" font-size="9.33" fill="#000">Jun</text>
<text x="1106.7" y="550" font-size="9.33" fill="#000">Jul</text>
<text x="1136.7" y="550" font-size="9.33" fill="#000">Aug</text>
<text x="1166.7" y="550" font-size="9.33" fill="#000">Sep</text>
<text x="1196.7" y="550" font-size="9.33" fill="#000">Oct</text>
<text x="1226.7" y="550" font-size="9.33" fill="#000">Nov</text>
<text x="1256.7" y="550" font-size="9.33" fill="#000">Dec</text>
<rect x="925" y="464.00" width="16" height="72.00" fill="rgb(88,184,216)"/>
<rect x="926" y="465.00" width="14" height="70.00" fill="url(#gtealT)"/>
<rect x="955" y="434.00" width="16" height="102.00" fill="rgb(88,184,216)"/>
<rect x="956" y="435.00" width="14" height="100.00" fill="url(#gtealT)"/>
<rect x="985" y="414.00" width="16" height="122.00" fill="rgb(88,184,216)"/>
<rect x="986" y="415.00" width="14" height="120.00" fill="url(#gtealT)"/>
<rect x="1015" y="411.00" width="16" height="125.00" fill="rgb(88,184,216)"/>
<rect x="1016" y="412.00" width="14" height="123.00" fill="url(#gtealT)"/>
<rect x="1045" y="449.00" width="16" height="87.00" fill="rgb(88,184,216)"/>
<rect x="1046" y="450.00" width="14" height="85.00" fill="url(#gtealT)"/>
<rect x="1075" y="466.00" width="16" height="70.00" fill="rgb(88,184,216)"/>
<rect x="1076" y="467.00" width="14" height="68.00" fill="url(#gtealT)"/>
<rect x="1105" y="463.00" width="16" height="73.00" fill="rgb(88,184,216)"/>
<rect x="1106" y="464.00" width="14" height="71.00" fill="url(#gtealT)"/>
<rect x="1135" y="464.00" width="16" height="72.00" fill="rgb(88,184,216)"/>
<rect x="1136" y="465.00" width="14" height="70.00" fill="url(#gtealT)"/>
<rect x="1165" y="466.00" width="16" height="70.00" fill="rgb(88,184,216)"/>
<rect x="1166" y="467.00" width="14" height="68.00" fill="url(#gtealT)"/>
<rect x="1195" y="456.00" width="16" height="80.00" fill="rgb(88,184,216)"/>
<rect x="1196" y="457.00" width="14" height="78.00" fill="url(#gtealT)"/>
<rect x="1225" y="448.00" width="16" height="88.00" fill="rgb(88,184,216)"/>
<rect x="1226" y="449.00" width="14" height="86.00" fill="url(#gtealT)"/>
<rect x="1255" y="463.00" width="16" height="73.00" fill="rgb(88,184,216)"/>
<rect x="1256" y="464.00" width="14" height="71.00" fill="url(#gtealT)"/>
<line x1="53" y1="579.500" x2="419" y2="579.500" stroke="#ababab" stroke-width="1"/>
<line x1="53" y1="595.375" x2="419" y2="595.375" stroke="#ababab" stroke-width="1"/>
<line x1="53" y1="611.250" x2="419" y2="611.250" stroke="#ababab" stroke-width="1"/>
<line x1="53" y1="627.125" x2="419" y2="627.125" stroke="#ababab" stroke-width="1"/>
<line x1="53" y1="643.000" x2="419" y2="643.000" stroke="#ababab" stroke-width="1"/>
<line x1="53" y1="658.875" x2="419" y2="658.875" stroke="#ababab" stroke-width="1"/>
<line x1="53" y1="674.750" x2="419" y2="674.750" stroke="#ababab" stroke-width="1"/>
<line x1="53" y1="690.625" x2="419" y2="690.625" stroke="#ababab" stroke-width="1"/>
<line x1="53" y1="706.500" x2="419" y2="706.500" stroke="#ababab" stroke-width="1"/>
<rect x="58" y="579" width="1" height="128" fill="#a4a4a4"/>
<rect x="58" y="707" width="1" height="5" fill="#a8a8a8"/>
<rect x="73" y="707" width="1" height="5" fill="#a8a8a8"/>
<rect x="88" y="707" width="1" height="5" fill="#a8a8a8"/>
<rect x="103" y="707" width="1" height="5" fill="#a8a8a8"/>
<rect x="118" y="707" width="1" height="5" fill="#a8a8a8"/>
<rect x="133" y="707" width="1" height="5" fill="#a8a8a8"/>
<rect x="148" y="707" width="1" height="5" fill="#a8a8a8"/>
<rect x="163" y="707" width="1" height="5" fill="#a8a8a8"/>
<rect x="178" y="707" width="1" height="5" fill="#a8a8a8"/>
<rect x="193" y="707" width="1" height="5" fill="#a8a8a8"/>
<rect x="208" y="707" width="1" height="5" fill="#a8a8a8"/>
<rect x="223" y="707" width="1" height="5" fill="#a8a8a8"/>
<rect x="238" y="707" width="1" height="5" fill="#a8a8a8"/>
<rect x="253" y="707" width="1" height="5" fill="#a8a8a8"/>
<rect x="268" y="707" width="1" height="5" fill="#a8a8a8"/>
<rect x="283" y="707" width="1" height="5" fill="#a8a8a8"/>
<rect x="298" y="707" width="1" height="5" fill="#a8a8a8"/>
<rect x="313" y="707" width="1" height="5" fill="#a8a8a8"/>
<rect x="328" y="707" width="1" height="5" fill="#a8a8a8"/>
<rect x="343" y="707" width="1" height="5" fill="#a8a8a8"/>
<rect x="358" y="707" width="1" height="5" fill="#a8a8a8"/>
<rect x="373" y="707" width="1" height="5" fill="#a8a8a8"/>
<rect x="388" y="707" width="1" height="5" fill="#a8a8a8"/>
<rect x="403" y="707" width="1" height="5" fill="#a8a8a8"/>
<text x="57" y="574" font-size="12.2" fill="#000">Profits and losses by hours</text>
<text x="47.0" y="583.0" font-size="9.33" text-anchor="end" fill="#000">39000</text>
<text x="47.0" y="614.8" font-size="9.33" text-anchor="end" fill="#000">29250</text>
<text x="47.0" y="646.5" font-size="9.33" text-anchor="end" fill="#000">19500</text>
<text x="47.0" y="678.2" font-size="9.33" text-anchor="end" fill="#000">9750</text>
<text x="47.0" y="710.0" font-size="9.33" text-anchor="end" fill="#000">0</text>
<text x="60.0" y="721" font-size="9.33" fill="#000">0</text>
<text x="75.0" y="721" font-size="9.33" fill="#000">1</text>
<text x="90.0" y="721" font-size="9.33" fill="#000">2</text>
<text x="105.0" y="721" font-size="9.33" fill="#000">3</text>
<text x="120.0" y="721" font-size="9.33" fill="#000">4</text>
<text x="135.0" y="721" font-size="9.33" fill="#000">5</text>
<text x="150.0" y="721" font-size="9.33" fill="#000">6</text>
<text x="165.0" y="721" font-size="9.33" fill="#000">7</text>
<text x="180.0" y="721" font-size="9.33" fill="#000">8</text>
<text x="195.0" y="721" font-size="9.33" fill="#000">9</text>
<text x="210.0" y="721" font-size="9.33" fill="#000">10</text>
<text x="225.0" y="721" font-size="9.33" fill="#000">11</text>
<text x="240.0" y="721" font-size="9.33" fill="#000">12</text>
<text x="255.0" y="721" font-size="9.33" fill="#000">13</text>
<text x="270.0" y="721" font-size="9.33" fill="#000">14</text>
<text x="285.0" y="721" font-size="9.33" fill="#000">15</text>
<text x="300.0" y="721" font-size="9.33" fill="#000">16</text>
<text x="315.0" y="721" font-size="9.33" fill="#000">17</text>
<text x="330.0" y="721" font-size="9.33" fill="#000">18</text>
<text x="345.0" y="721" font-size="9.33" fill="#000">19</text>
<text x="360.0" y="721" font-size="9.33" fill="#000">20</text>
<text x="375.0" y="721" font-size="9.33" fill="#000">21</text>
<text x="390.0" y="721" font-size="9.33" fill="#000">22</text>
<text x="405.0" y="721" font-size="9.33" fill="#000">23</text>
<rect x="74" y="669.00" width="7" height="38.00" fill="rgb(120,152,220)"/>
<rect x="75" y="670.00" width="5" height="36.00" fill="url(#gblueB)"/>
<rect x="81" y="703.00" width="7" height="4.00" fill="rgb(232,122,96)"/>
<rect x="82" y="704.00" width="5" height="2.00" fill="url(#glossB)"/>
<rect x="89" y="699.00" width="7" height="8.00" fill="rgb(120,152,220)"/>
<rect x="90" y="700.00" width="5" height="6.00" fill="url(#gblueB)"/>
<rect x="96" y="705.00" width="7" height="2.00" fill="rgb(232,122,96)"/>
<rect x="104" y="687.00" width="7" height="20.00" fill="rgb(120,152,220)"/>
<rect x="105" y="688.00" width="5" height="18.00" fill="url(#gblueB)"/>
<rect x="111" y="705.00" width="7" height="2.00" fill="rgb(232,122,96)"/>
<rect x="119" y="682.00" width="7" height="25.00" fill="rgb(120,152,220)"/>
<rect x="120" y="683.00" width="5" height="23.00" fill="url(#gblueB)"/>
<rect x="126" y="704.00" width="7" height="3.00" fill="rgb(232,122,96)"/>
<rect x="127" y="705.00" width="5" height="1.00" fill="url(#glossB)"/>
<rect x="134" y="696.00" width="7" height="11.00" fill="rgb(120,152,220)"/>
<rect x="135" y="697.00" width="5" height="9.00" fill="url(#gblueB)"/>
<rect x="141" y="706.00" width="7" height="1.00" fill="rgb(232,122,96)"/>
<rect x="149" y="703.00" width="7" height="4.00" fill="rgb(120,152,220)"/>
<rect x="150" y="704.00" width="5" height="2.00" fill="url(#gblueB)"/>
<rect x="156" y="706.00" width="7" height="1.00" fill="rgb(232,122,96)"/>
<rect x="164" y="702.00" width="7" height="5.00" fill="rgb(120,152,220)"/>
<rect x="165" y="703.00" width="5" height="3.00" fill="url(#gblueB)"/>
<rect x="171" y="706.00" width="7" height="1.00" fill="rgb(232,122,96)"/>
<rect x="179" y="696.00" width="7" height="11.00" fill="rgb(120,152,220)"/>
<rect x="180" y="697.00" width="5" height="9.00" fill="url(#gblueB)"/>
<rect x="186" y="705.00" width="7" height="2.00" fill="rgb(232,122,96)"/>
<rect x="194" y="695.00" width="7" height="12.00" fill="rgb(120,152,220)"/>
<rect x="195" y="696.00" width="5" height="10.00" fill="url(#gblueB)"/>
<rect x="201" y="704.00" width="7" height="3.00" fill="rgb(232,122,96)"/>
<rect x="202" y="705.00" width="5" height="1.00" fill="url(#glossB)"/>
<rect x="209" y="690.00" width="7" height="17.00" fill="rgb(120,152,220)"/>
<rect x="210" y="691.00" width="5" height="15.00" fill="url(#gblueB)"/>
<rect x="216" y="704.00" width="7" height="3.00" fill="rgb(232,122,96)"/>
<rect x="217" y="705.00" width="5" height="1.00" fill="url(#glossB)"/>
<rect x="224" y="691.00" width="7" height="16.00" fill="rgb(120,152,220)"/>
<rect x="225" y="692.00" width="5" height="14.00" fill="url(#gblueB)"/>
<rect x="231" y="705.00" width="7" height="2.00" fill="rgb(232,122,96)"/>
<rect x="239" y="691.00" width="7" height="16.00" fill="rgb(120,152,220)"/>
<rect x="240" y="692.00" width="5" height="14.00" fill="url(#gblueB)"/>
<rect x="246" y="705.00" width="7" height="2.00" fill="rgb(232,122,96)"/>
<rect x="254" y="695.00" width="7" height="12.00" fill="rgb(120,152,220)"/>
<rect x="255" y="696.00" width="5" height="10.00" fill="url(#gblueB)"/>
<rect x="261" y="705.00" width="7" height="2.00" fill="rgb(232,122,96)"/>
<rect x="269" y="691.00" width="7" height="16.00" fill="rgb(120,152,220)"/>
<rect x="270" y="692.00" width="5" height="14.00" fill="url(#gblueB)"/>
<rect x="276" y="704.00" width="7" height="3.00" fill="rgb(232,122,96)"/>
<rect x="277" y="705.00" width="5" height="1.00" fill="url(#glossB)"/>
<rect x="284" y="581.00" width="7" height="126.00" fill="rgb(120,152,220)"/>
<rect x="285" y="582.00" width="5" height="124.00" fill="url(#gblueB)"/>
<rect x="291" y="698.00" width="7" height="9.00" fill="rgb(232,122,96)"/>
<rect x="292" y="699.00" width="5" height="7.00" fill="url(#glossB)"/>
<rect x="299" y="635.00" width="7" height="72.00" fill="rgb(120,152,220)"/>
<rect x="300" y="636.00" width="5" height="70.00" fill="url(#gblueB)"/>
<rect x="306" y="701.00" width="7" height="6.00" fill="rgb(232,122,96)"/>
<rect x="307" y="702.00" width="5" height="4.00" fill="url(#glossB)"/>
<rect x="314" y="623.00" width="7" height="84.00" fill="rgb(120,152,220)"/>
<rect x="315" y="624.00" width="5" height="82.00" fill="url(#gblueB)"/>
<rect x="321" y="702.00" width="7" height="5.00" fill="rgb(232,122,96)"/>
<rect x="322" y="703.00" width="5" height="3.00" fill="url(#glossB)"/>
<rect x="329" y="672.00" width="7" height="35.00" fill="rgb(120,152,220)"/>
<rect x="330" y="673.00" width="5" height="33.00" fill="url(#gblueB)"/>
<rect x="336" y="704.00" width="7" height="3.00" fill="rgb(232,122,96)"/>
<rect x="337" y="705.00" width="5" height="1.00" fill="url(#glossB)"/>
<rect x="344" y="689.00" width="7" height="18.00" fill="rgb(120,152,220)"/>
<rect x="345" y="690.00" width="5" height="16.00" fill="url(#gblueB)"/>
<rect x="351" y="704.00" width="7" height="3.00" fill="rgb(232,122,96)"/>
<rect x="352" y="705.00" width="5" height="1.00" fill="url(#glossB)"/>
<rect x="359" y="690.00" width="7" height="17.00" fill="rgb(120,152,220)"/>
<rect x="360" y="691.00" width="5" height="15.00" fill="url(#gblueB)"/>
<rect x="366" y="705.00" width="7" height="2.00" fill="rgb(232,122,96)"/>
<rect x="374" y="677.00" width="7" height="30.00" fill="rgb(120,152,220)"/>
<rect x="375" y="678.00" width="5" height="28.00" fill="url(#gblueB)"/>
<rect x="381" y="705.00" width="7" height="2.00" fill="rgb(232,122,96)"/>
<rect x="389" y="694.00" width="7" height="13.00" fill="rgb(120,152,220)"/>
<rect x="390" y="695.00" width="5" height="11.00" fill="url(#gblueB)"/>
<rect x="396" y="705.00" width="7" height="2.00" fill="rgb(232,122,96)"/>
<rect x="404" y="700.00" width="7" height="7.00" fill="rgb(120,152,220)"/>
<rect x="405" y="701.00" width="5" height="5.00" fill="url(#gblueB)"/>
<rect x="411" y="705.00" width="7" height="2.00" fill="rgb(232,122,96)"/>
<line x1="483" y1="579.500" x2="832" y2="579.500" stroke="#ababab" stroke-width="1"/>
<line x1="483" y1="595.375" x2="832" y2="595.375" stroke="#ababab" stroke-width="1"/>
<line x1="483" y1="611.250" x2="832" y2="611.250" stroke="#ababab" stroke-width="1"/>
<line x1="483" y1="627.125" x2="832" y2="627.125" stroke="#ababab" stroke-width="1"/>
<line x1="483" y1="643.000" x2="832" y2="643.000" stroke="#ababab" stroke-width="1"/>
<line x1="483" y1="658.875" x2="832" y2="658.875" stroke="#ababab" stroke-width="1"/>
<line x1="483" y1="674.750" x2="832" y2="674.750" stroke="#ababab" stroke-width="1"/>
<line x1="483" y1="690.625" x2="832" y2="690.625" stroke="#ababab" stroke-width="1"/>
<line x1="483" y1="706.500" x2="832" y2="706.500" stroke="#ababab" stroke-width="1"/>
<rect x="488" y="579" width="1" height="128" fill="#a4a4a4"/>
<rect x="488" y="707" width="1" height="5" fill="#a8a8a8"/>
<rect x="537" y="707" width="1" height="5" fill="#a8a8a8"/>
<rect x="586" y="707" width="1" height="5" fill="#a8a8a8"/>
<rect x="635" y="707" width="1" height="5" fill="#a8a8a8"/>
<rect x="684" y="707" width="1" height="5" fill="#a8a8a8"/>
<rect x="733" y="707" width="1" height="5" fill="#a8a8a8"/>
<rect x="782" y="707" width="1" height="5" fill="#a8a8a8"/>
<text x="487" y="574" font-size="12.2" fill="#000">Profits and losses by weekdays</text>
<text x="477.0" y="583.0" font-size="9.33" text-anchor="end" fill="#000">38000</text>
<text x="477.0" y="598.9" font-size="9.33" text-anchor="end" fill="#000">33250</text>
<text x="477.0" y="614.8" font-size="9.33" text-anchor="end" fill="#000">28500</text>
<text x="477.0" y="630.6" font-size="9.33" text-anchor="end" fill="#000">23750</text>
<text x="477.0" y="646.5" font-size="9.33" text-anchor="end" fill="#000">19000</text>
<text x="477.0" y="662.4" font-size="9.33" text-anchor="end" fill="#000">14250</text>
<text x="477.0" y="678.2" font-size="9.33" text-anchor="end" fill="#000">9500</text>
<text x="477.0" y="694.1" font-size="9.33" text-anchor="end" fill="#000">4750</text>
<text x="477.0" y="710.0" font-size="9.33" text-anchor="end" fill="#000">0</text>
<text x="501.5" y="721" font-size="9.33" fill="#000">Sun</text>
<text x="550.5" y="721" font-size="9.33" fill="#000">Mon</text>
<text x="599.5" y="721" font-size="9.33" fill="#000">Tue</text>
<text x="648.5" y="721" font-size="9.33" fill="#000">Wed</text>
<text x="697.5" y="721" font-size="9.33" fill="#000">Thu</text>
<text x="746.5" y="721" font-size="9.33" fill="#000">Fri</text>
<text x="795.5" y="721" font-size="9.33" fill="#000">Sat</text>
<rect x="549" y="589.30" width="13" height="117.70" fill="rgb(120,152,220)"/>
<rect x="550" y="590.30" width="11" height="115.70" fill="url(#gblueB)"/>
<rect x="562" y="696.00" width="13" height="11.00" fill="rgb(232,122,96)"/>
<rect x="563" y="697.00" width="11" height="9.00" fill="url(#glossB)"/>
<rect x="598" y="583.50" width="13" height="123.50" fill="rgb(120,152,220)"/>
<rect x="599" y="584.50" width="11" height="121.50" fill="url(#gblueB)"/>
<rect x="611" y="697.00" width="13" height="10.00" fill="rgb(232,122,96)"/>
<rect x="612" y="698.00" width="11" height="8.00" fill="url(#glossB)"/>
<rect x="647" y="581.60" width="13" height="125.40" fill="rgb(120,152,220)"/>
<rect x="648" y="582.60" width="11" height="123.40" fill="url(#gblueB)"/>
<rect x="660" y="697.00" width="13" height="10.00" fill="rgb(232,122,96)"/>
<rect x="661" y="698.00" width="11" height="8.00" fill="url(#glossB)"/>
<rect x="696" y="581.00" width="13" height="126.00" fill="rgb(120,152,220)"/>
<rect x="697" y="582.00" width="11" height="124.00" fill="url(#gblueB)"/>
<rect x="709" y="693.00" width="13" height="14.00" fill="rgb(232,122,96)"/>
<rect x="710" y="694.00" width="11" height="12.00" fill="url(#glossB)"/>
<rect x="745" y="584.50" width="13" height="122.50" fill="rgb(120,152,220)"/>
<rect x="746" y="585.50" width="11" height="120.50" fill="url(#gblueB)"/>
<rect x="758" y="696.00" width="13" height="11.00" fill="rgb(232,122,96)"/>
<rect x="759" y="697.00" width="11" height="9.00" fill="url(#glossB)"/>
<line x1="913" y1="579.500" x2="1279" y2="579.500" stroke="#ababab" stroke-width="1"/>
<line x1="913" y1="595.375" x2="1279" y2="595.375" stroke="#ababab" stroke-width="1"/>
<line x1="913" y1="611.250" x2="1279" y2="611.250" stroke="#ababab" stroke-width="1"/>
<line x1="913" y1="627.125" x2="1279" y2="627.125" stroke="#ababab" stroke-width="1"/>
<line x1="913" y1="643.000" x2="1279" y2="643.000" stroke="#ababab" stroke-width="1"/>
<line x1="913" y1="658.875" x2="1279" y2="658.875" stroke="#ababab" stroke-width="1"/>
<line x1="913" y1="674.750" x2="1279" y2="674.750" stroke="#ababab" stroke-width="1"/>
<line x1="913" y1="690.625" x2="1279" y2="690.625" stroke="#ababab" stroke-width="1"/>
<line x1="913" y1="706.500" x2="1279" y2="706.500" stroke="#ababab" stroke-width="1"/>
<rect x="918" y="579" width="1" height="128" fill="#a4a4a4"/>
<rect x="918" y="707" width="1" height="5" fill="#a8a8a8"/>
<rect x="948" y="707" width="1" height="5" fill="#a8a8a8"/>
<rect x="978" y="707" width="1" height="5" fill="#a8a8a8"/>
<rect x="1008" y="707" width="1" height="5" fill="#a8a8a8"/>
<rect x="1038" y="707" width="1" height="5" fill="#a8a8a8"/>
<rect x="1068" y="707" width="1" height="5" fill="#a8a8a8"/>
<rect x="1098" y="707" width="1" height="5" fill="#a8a8a8"/>
<rect x="1128" y="707" width="1" height="5" fill="#a8a8a8"/>
<rect x="1158" y="707" width="1" height="5" fill="#a8a8a8"/>
<rect x="1188" y="707" width="1" height="5" fill="#a8a8a8"/>
<rect x="1218" y="707" width="1" height="5" fill="#a8a8a8"/>
<rect x="1248" y="707" width="1" height="5" fill="#a8a8a8"/>
<text x="917" y="574" font-size="12.2" fill="#000">Profits and losses by months</text>
<text x="907.0" y="583.0" font-size="9.33" text-anchor="end" fill="#000">31000</text>
<text x="907.0" y="614.8" font-size="9.33" text-anchor="end" fill="#000">23250</text>
<text x="907.0" y="646.5" font-size="9.33" text-anchor="end" fill="#000">15500</text>
<text x="907.0" y="678.2" font-size="9.33" text-anchor="end" fill="#000">7750</text>
<text x="907.0" y="710.0" font-size="9.33" text-anchor="end" fill="#000">0</text>
<text x="926.7" y="721" font-size="9.33" fill="#000">Jan</text>
<text x="956.7" y="721" font-size="9.33" fill="#000">Feb</text>
<text x="986.7" y="721" font-size="9.33" fill="#000">Mar</text>
<text x="1016.7" y="721" font-size="9.33" fill="#000">Apr</text>
<text x="1046.7" y="721" font-size="9.33" fill="#000">May</text>
<text x="1076.7" y="721" font-size="9.33" fill="#000">Jun</text>
<text x="1106.7" y="721" font-size="9.33" fill="#000">Jul</text>
<text x="1136.7" y="721" font-size="9.33" fill="#000">Aug</text>
<text x="1166.7" y="721" font-size="9.33" fill="#000">Sep</text>
<text x="1196.7" y="721" font-size="9.33" fill="#000">Oct</text>
<text x="1226.7" y="721" font-size="9.33" fill="#000">Nov</text>
<text x="1256.7" y="721" font-size="9.33" fill="#000">Dec</text>
<rect x="925" y="673.00" width="8" height="34.00" fill="rgb(120,152,220)"/>
<rect x="926" y="674.00" width="6" height="32.00" fill="url(#gblueB)"/>
<rect x="933" y="694.00" width="8" height="13.00" fill="rgb(232,122,96)"/>
<rect x="934" y="695.00" width="6" height="11.00" fill="url(#glossB)"/>
<rect x="955" y="629.00" width="8" height="78.00" fill="rgb(120,152,220)"/>
<rect x="956" y="630.00" width="6" height="76.00" fill="url(#gblueB)"/>
<rect x="963" y="700.00" width="8" height="7.00" fill="rgb(232,122,96)"/>
<rect x="964" y="701.00" width="6" height="5.00" fill="url(#glossB)"/>
<rect x="985" y="582.00" width="8" height="125.00" fill="rgb(120,152,220)"/>
<rect x="986" y="583.00" width="6" height="123.00" fill="url(#gblueB)"/>
<rect x="993" y="701.00" width="8" height="6.00" fill="rgb(232,122,96)"/>
<rect x="994" y="702.00" width="6" height="4.00" fill="url(#glossB)"/>
<rect x="1015" y="609.00" width="8" height="98.00" fill="rgb(120,152,220)"/>
<rect x="1016" y="610.00" width="6" height="96.00" fill="url(#gblueB)"/>
<rect x="1023" y="701.00" width="8" height="6.00" fill="rgb(232,122,96)"/>
<rect x="1024" y="702.00" width="6" height="4.00" fill="url(#glossB)"/>
<rect x="1045" y="641.00" width="8" height="66.00" fill="rgb(120,152,220)"/>
<rect x="1046" y="642.00" width="6" height="64.00" fill="url(#gblueB)"/>
<rect x="1053" y="702.00" width="8" height="5.00" fill="rgb(232,122,96)"/>
<rect x="1054" y="703.00" width="6" height="3.00" fill="url(#glossB)"/>
<rect x="1075" y="660.00" width="8" height="47.00" fill="rgb(120,152,220)"/>
<rect x="1076" y="661.00" width="6" height="45.00" fill="url(#gblueB)"/>
<rect x="1083" y="702.00" width="8" height="5.00" fill="rgb(232,122,96)"/>
<rect x="1084" y="703.00" width="6" height="3.00" fill="url(#glossB)"/>
<rect x="1105" y="651.00" width="8" height="56.00" fill="rgb(120,152,220)"/>
<rect x="1106" y="652.00" width="6" height="54.00" fill="url(#gblueB)"/>
<rect x="1113" y="702.00" width="8" height="5.00" fill="rgb(232,122,96)"/>
<rect x="1114" y="703.00" width="6" height="3.00" fill="url(#glossB)"/>
<rect x="1135" y="651.00" width="8" height="56.00" fill="rgb(120,152,220)"/>
<rect x="1136" y="652.00" width="6" height="54.00" fill="url(#gblueB)"/>
<rect x="1143" y="702.00" width="8" height="5.00" fill="rgb(232,122,96)"/>
<rect x="1144" y="703.00" width="6" height="3.00" fill="url(#glossB)"/>
<rect x="1165" y="666.00" width="8" height="41.00" fill="rgb(120,152,220)"/>
<rect x="1166" y="667.00" width="6" height="39.00" fill="url(#gblueB)"/>
<rect x="1173" y="702.00" width="8" height="5.00" fill="rgb(232,122,96)"/>
<rect x="1174" y="703.00" width="6" height="3.00" fill="url(#glossB)"/>
<rect x="1195" y="667.00" width="8" height="40.00" fill="rgb(120,152,220)"/>
<rect x="1196" y="668.00" width="6" height="38.00" fill="url(#gblueB)"/>
<rect x="1203" y="702.00" width="8" height="5.00" fill="rgb(232,122,96)"/>
<rect x="1204" y="703.00" width="6" height="3.00" fill="url(#glossB)"/>
<rect x="1225" y="643.00" width="8" height="64.00" fill="rgb(120,152,220)"/>
<rect x="1226" y="644.00" width="6" height="62.00" fill="url(#gblueB)"/>
<rect x="1233" y="701.00" width="8" height="6.00" fill="rgb(232,122,96)"/>
<rect x="1234" y="702.00" width="6" height="4.00" fill="url(#glossB)"/>
<rect x="1255" y="652.00" width="8" height="55.00" fill="rgb(120,152,220)"/>
<rect x="1256" y="653.00" width="6" height="53.00" fill="url(#gblueB)"/>
<rect x="1263" y="702.00" width="8" height="5.00" fill="rgb(232,122,96)"/>
<rect x="1264" y="703.00" width="6" height="3.00" fill="url(#glossB)"/>
<rect x="53" y="780" width="1225" height="1" fill="#a8a8a8"/>
<rect x="53" y="798" width="5" height="1" fill="#c4c4c4"/>
<rect x="59" y="798" width="1218" height="1" fill="#dcdcdc"/>
<rect x="58" y="780" width="1" height="28" fill="#a8a8a8"/>
<line x1="174.35" y1="781" x2="174.35" y2="808" stroke="#cfcfcf" stroke-width="1"/>
<line x1="290.20" y1="781" x2="290.20" y2="808" stroke="#cfcfcf" stroke-width="1"/>
<line x1="406.05" y1="781" x2="406.05" y2="808" stroke="#cfcfcf" stroke-width="1"/>
<line x1="521.90" y1="781" x2="521.90" y2="808" stroke="#cfcfcf" stroke-width="1"/>
<line x1="637.75" y1="781" x2="637.75" y2="808" stroke="#cfcfcf" stroke-width="1"/>
<line x1="753.60" y1="781" x2="753.60" y2="808" stroke="#cfcfcf" stroke-width="1"/>
<line x1="869.45" y1="781" x2="869.45" y2="808" stroke="#cfcfcf" stroke-width="1"/>
<line x1="985.30" y1="781" x2="985.30" y2="808" stroke="#cfcfcf" stroke-width="1"/>
<line x1="1101.15" y1="781" x2="1101.15" y2="808" stroke="#cfcfcf" stroke-width="1"/>
<line x1="1217.00" y1="781" x2="1217.00" y2="808" stroke="#cfcfcf" stroke-width="1"/>
<rect x="1277" y="780" width="1" height="28" fill="#a8a8a8"/>
<text x="47" y="783.8" font-size="9.33" text-anchor="end">1500</text>
<text x="47" y="801.8" font-size="9.33" text-anchor="end">1200</text>
<text x="65" y="792.6" font-size="9.33">Profit</text>
</svg>
</body></html>
